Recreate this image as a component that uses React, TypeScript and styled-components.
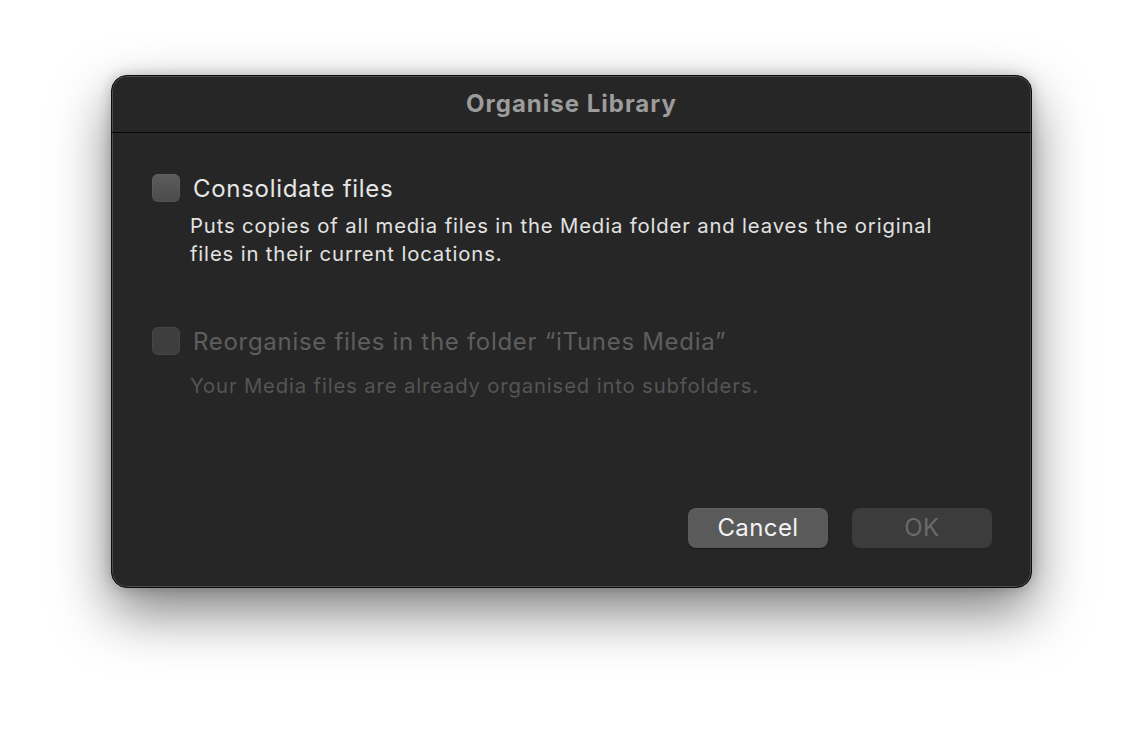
import styled, { createGlobalStyle } from "styled-components";

const GlobalStyle = createGlobalStyle`
  html, body {
    margin: 0;
    padding: 0;
    background: #ffffff;
  }
  body {
    font-family: Inter, "Noto Sans", "Liberation Sans", sans-serif;
    -webkit-font-smoothing: antialiased;
  }
`;

const Page = styled.div`
  width: 1144px;
  height: 736px;
  padding: 75px 0 0 111px;
  box-sizing: border-box;
  background: #ffffff;
`;

const Window = styled.div`
  width: 921px;
  height: 513px;
  box-sizing: border-box;
  background: #262626;
  border-radius: 16px;
  border: 1px solid #0c0c0c;
  box-shadow: inset 0 0 0 1px #4e4e4e, 0 24px 55px rgba(0, 0, 0, 0.5),
    0 0 14px rgba(0, 0, 0, 0.22);
  display: flex;
  flex-direction: column;
  overflow: hidden;
`;

const TitleBar = styled.div`
  height: 57px;
  padding-bottom: 2px;
  box-sizing: border-box;
  flex-shrink: 0;
  display: flex;
  align-items: center;
  justify-content: center;
  border-bottom: 1px solid #080808;
  color: #9c9c9c;
  font-size: 24px;
  font-weight: 700;
  letter-spacing: 1px;
`;

const Body = styled.div`
  flex: 1;
  display: flex;
  flex-direction: column;
  padding: 41px 39px 39px 40px;
`;

const Option = styled.div<{ $gap: number }>`
  display: flex;
  flex-direction: column;
  margin-bottom: ${(p) => p.$gap}px;
`;

const OptionRow = styled.div`
  display: flex;
  align-items: center;
  gap: 13px;
  height: 28px;
`;

const Box = styled.div<{ $disabled?: boolean }>`
  width: 28px;
  height: 28px;
  box-sizing: border-box;
  border-radius: 6px;
  background: ${(p) =>
    p.$disabled
      ? "#3e3e3e"
      : "linear-gradient(180deg, #5c5c5c 0%, #4b4b4b 100%)"};
  box-shadow: inset 0 0 0 0.5px rgba(255, 255, 255, 0.08);
`;

const Label = styled.span<{ $disabled?: boolean }>`
  font-size: 24px;
  letter-spacing: 0.7px;
  color: ${(p) => (p.$disabled ? "#5e5e5e" : "#e6e6e6")};
`;

const Description = styled.p<{ $disabled?: boolean; $top: number }>`
  margin: ${(p) => p.$top}px 0 0 38px;
  font-size: 20.3px;
  line-height: 28px;
  letter-spacing: 0.85px;
  max-width: 775px;
  color: ${(p) => (p.$disabled ? "#555555" : "#e2e2e2")};
`;

const Footer = styled.div`
  margin-top: auto;
  display: flex;
  justify-content: flex-end;
  gap: 24px;
`;

const Button = styled.button<{ $disabled?: boolean }>`
  width: 140px;
  height: 40px;
  border: none;
  border-radius: 8px;
  font-family: inherit;
  font-size: 24px;
  letter-spacing: 0.4px;
  padding: 0 0 2px;
  color: ${(p) => (p.$disabled ? "#6a6a6a" : "#f2f2f2")};
  background: ${(p) => (p.$disabled ? "#3c3c3c" : "#5a5a5a")};
  box-shadow: ${(p) =>
    p.$disabled ? "none" : "0 0.5px 1px rgba(0,0,0,0.4), inset 0 0.5px 0 rgba(255,255,255,0.1)"};
`;

export default function App() {
  return (
    <>
      <GlobalStyle />
      <Page>
        <Window>
          <TitleBar>Organise Library</TitleBar>
          <Body>
            <Option $gap={59}>
              <OptionRow>
                <Box />
                <Label>Consolidate files</Label>
              </OptionRow>
              <Description $top={10}>
                Puts copies of all media files in the Media folder and leaves the original
                files in their current locations.
              </Description>
            </Option>
            <Option $gap={0}>
              <OptionRow>
                <Box $disabled />
                <Label $disabled>Reorganise files in the folder “iTunes Media”</Label>
              </OptionRow>
              <Description $disabled $top={17}>
                Your Media files are already organised into subfolders.
              </Description>
            </Option>
            <Footer>
              <Button>Cancel</Button>
              <Button $disabled>OK</Button>
            </Footer>
          </Body>
        </Window>
      </Page>
    </>
  );
}
